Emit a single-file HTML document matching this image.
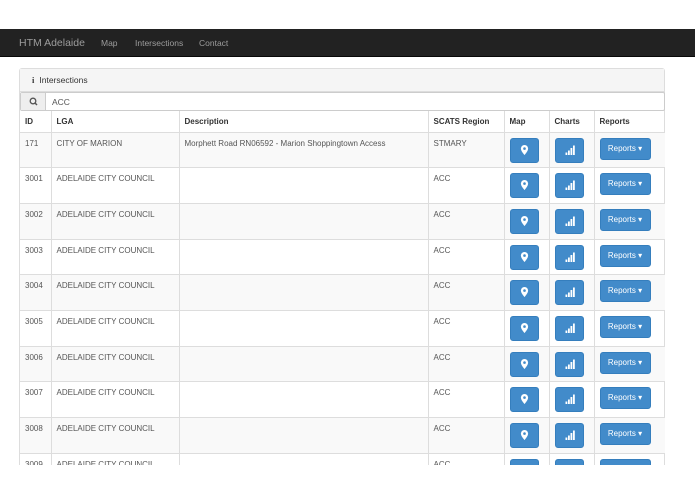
<!DOCTYPE html>
<html><head><style>
*{box-sizing:border-box;margin:0;padding:0}
html,body{width:695px;height:494px;overflow:hidden}
body{background:#fff;font-family:"Liberation Sans",sans-serif;color:#333;position:relative}
.nav{position:absolute;left:0;top:29px;width:695px;height:28px;background:#222;border-bottom:1px solid #080808}
.nav span{position:absolute;top:9px;font-size:8.5px;color:#9d9d9d}
.nav .brand{font-size:10.5px;top:8px;left:19px}
.clip{position:absolute;left:0;top:0;width:695px;height:465px;overflow:hidden}
.panel{position:absolute;left:19px;top:68px;width:646px;height:420px;border:1px solid #ddd;border-radius:3px}
.head{height:23px;background:#f5f5f5;border-bottom:1px solid #ddd;font-size:8.5px;padding:6px 0 0 12px;color:#333}
.head b{font-family:"Liberation Serif",serif;font-weight:bold;margin-right:5px}
.search{position:absolute;left:0;top:23px;width:645px;height:19px;border:1px solid #ccc;border-radius:2px}
.search .add{position:absolute;left:0;top:0;width:25px;height:17px;background:#eee;border-right:1px solid #ccc}
.search .t{position:absolute;left:31px;top:4px;font-size:8.5px;color:#555}
table{position:absolute;left:0;top:42px;width:645px;border-collapse:collapse;font-size:8px}
td,th{border-left:1px solid #ddd;border-top:1px solid #ddd;vertical-align:top;text-align:left;padding:5px 5px 0}
th{height:21px;padding-top:6px;font-weight:bold;border-top:none;color:#333}
td{color:#555}
tr td:first-child,tr th:first-child{border-left:none}
td{height:35.7px;padding-top:6px}
tr.o td{background:#f9f9f9}
.btn{display:inline-block;background:#428bca;border:1px solid #357ebd;border-radius:3px;color:#fff;text-align:center}
.ib{width:29px;height:25px;margin-top:-1px;position:relative}
.rb{width:51px;height:22px;margin-top:-1px;font-size:8px;line-height:20px}
</style></head><body>
<div class="nav"><span class="brand">HTM Adelaide</span><span style="left:101px">Map</span><span style="left:135px">Intersections</span><span style="left:199px">Contact</span></div>
<div class="clip">
<div class="panel">
<div class="head"><b>i</b>Intersections</div>
<div class="search"><div class="add"><svg width="25" height="17"><circle cx="12" cy="8" r="2.8" fill="none" stroke="#555" stroke-width="1.3"/><line x1="14" y1="10" x2="16" y2="12" stroke="#555" stroke-width="1.5"/></svg></div><span class="t">ACC</span></div>
<table>
<tr><th style="width:31px">ID</th><th style="width:128px">LGA</th><th style="width:249px">Description</th><th style="width:76px">SCATS Region</th><th style="width:45px">Map</th><th style="width:45px">Charts</th><th>Reports</th></tr>
</table>
</div></div>
<script>
var rows=[["171","CITY OF MARION","Morphett Road RN06592 - Marion Shoppingtown Access","STMARY"]];
["3001","3002","3003","3004","3005","3006","3007","3008","3009"].forEach(function(i){rows.push([i,"ADELAIDE CITY COUNCIL","","ACC"])});
var pin='<svg width="29" height="25" style="position:absolute;left:-1px;top:-1px"><path d="M14.5 7a3.6 3.6 0 0 0-3.6 3.6c0 2.6 3.6 6.4 3.6 6.4s3.6-3.8 3.6-6.4A3.6 3.6 0 0 0 14.5 7z" fill="#fff"/><circle cx="14.5" cy="10.6" r="1.3" fill="#428bca"/></svg>';
var bars='<svg width="29" height="25" style="position:absolute;left:-1px;top:-1px"><rect x="10.5" y="14.5" width="1.8" height="2.5" fill="#fff"/><rect x="13" y="12.5" width="1.8" height="4.5" fill="#fff"/><rect x="15.5" y="10" width="1.8" height="7" fill="#fff"/><rect x="18" y="7.5" width="1.8" height="9.5" fill="#fff"/></svg>';
var h='';rows.forEach(function(r,k){h+='<tr class="'+(k%2==0?'o':'')+'"><td>'+r[0]+'</td><td>'+r[1]+'</td><td>'+r[2]+'</td><td>'+r[3]+'</td><td><span class="btn ib">'+pin+'</span></td><td><span class="btn ib">'+bars+'</span></td><td><span class="btn rb">Reports &#9662;</span></td></tr>'});
document.querySelector('table').insertAdjacentHTML('beforeend',h);
</script>
</body></html>
